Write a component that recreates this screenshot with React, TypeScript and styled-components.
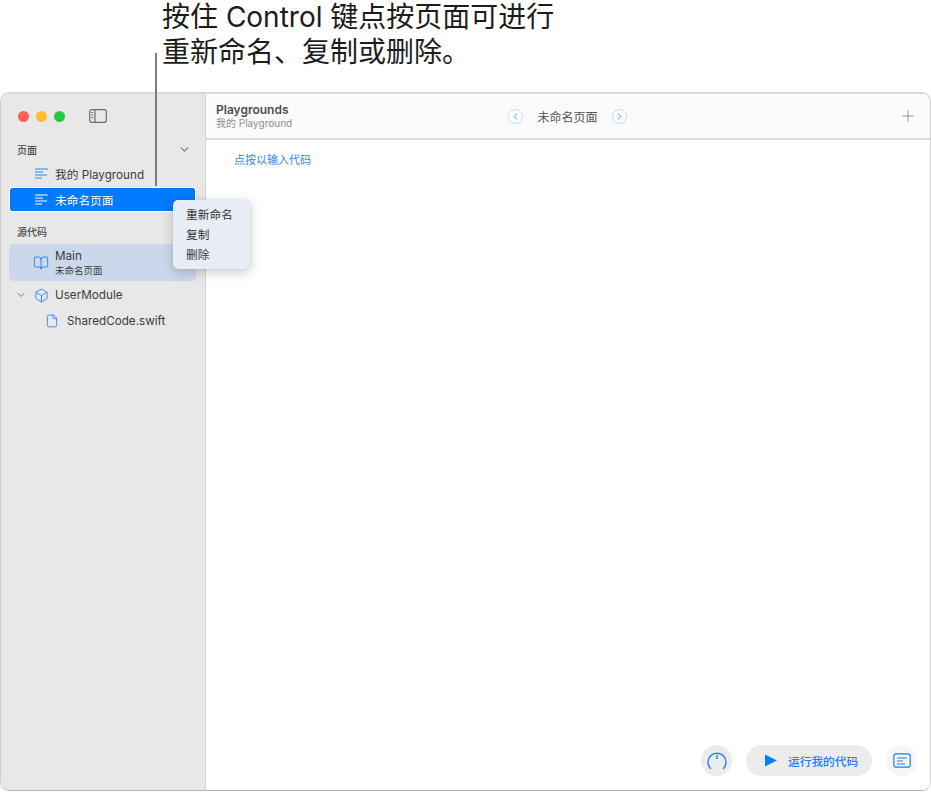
import styled, { createGlobalStyle } from "styled-components";
import { BookOpen, Box, ChevronDown, ChevronLeft, ChevronRight, File, Plus } from "lucide-react";

const GlobalStyle = createGlobalStyle`
  html, body {
    margin: 0;
    background: #fff;
  }
  * {
    box-sizing: border-box;
  }
  body {
    font-family: Inter, "Noto Sans CJK SC", sans-serif;
  }
`;

const Page = styled.div`
  position: relative;
  width: 931px;
  height: 793px;
  overflow: hidden;
`;

const Callout = styled.div`
  height: 92px;
  padding: 0 0 0 162px;
  font-size: 28px;
  line-height: 35px;
  color: #1c1c1c;
`;

const LeaderLine = styled.div`
  position: absolute;
  left: 155px;
  top: 53px;
  width: 2px;
  height: 133px;
  background: #7d7d7d;
  z-index: 3;
`;

const Window = styled.div`
  position: relative;
  display: flex;
  width: 931px;
  height: 699px;
  border: 1px solid #cfcfcf;
  border-top: 2px solid #d9d9d9;
  border-bottom-color: #b5b5b5;
  border-radius: 9px;
  overflow: hidden;
`;

const Sidebar = styled.aside`
  width: 205px;
  flex-shrink: 0;
  background: #e8e8e8;
  border-right: 1px solid #d4d4d4;
  padding: 0 9px 0 8px;
  color: #3c3c3c;
`;

const TitleBar = styled.div`
  display: flex;
  align-items: center;
  height: 44px;
  padding: 0 0 0 9px;
  gap: 7px;
`;

const Light = styled.span<{ $color: string }>`
  width: 11px;
  height: 11px;
  border-radius: 50%;
  background: ${(p) => p.$color};
`;

const ToggleIcon = styled.svg`
  margin-left: 17px;
  color: #6d6d6d;
`;

const SectionHead = styled.div<{ $top: number }>`
  display: flex;
  align-items: center;
  justify-content: space-between;
  height: 14px;
  margin-top: ${(p) => p.$top}px;
  padding: 0 5px 0 8px;
  font-size: 10px;
  font-weight: 500;
  color: #4a4a4a;

  svg {
    color: #777;
  }
`;

const Row = styled.div<{ $top: number; $selected?: boolean }>`
  display: flex;
  align-items: center;
  height: 23px;
  margin: ${(p) => p.$top}px 1px 0;
  padding-left: 25px;
  gap: 7px;
  font-size: 11.7px;
  border-radius: 2px;
  color: ${(p) => (p.$selected ? "#fff" : "#3c3c3c")};
  background: ${(p) => (p.$selected ? "#007aff" : "transparent")};
  outline: ${(p) => (p.$selected ? "1px solid #fff" : "none")};

  svg {
    color: ${(p) => (p.$selected ? "#fff" : "#2f86f6")};
    flex-shrink: 0;
  }
`;

const MainRow = styled.div`
  display: flex;
  align-items: center;
  height: 37px;
  margin-top: 6px;
  padding-left: 24px;
  gap: 6px;
  background: #cbd8ec;
  border-radius: 5px;

  svg {
    color: #2f86f6;
    flex-shrink: 0;
  }
`;

const RowText = styled.div`
  display: flex;
  flex-direction: column;
  gap: 2px;
  font-size: 11.7px;
  line-height: 14px;
`;

const RowSub = styled.span`
  font-size: 9.5px;
  line-height: 12px;
`;

const TreeRow = styled.div<{ $top: number; $left: number; $gap: number }>`
  display: flex;
  align-items: center;
  height: 20px;
  margin-top: ${(p) => p.$top}px;
  padding-left: ${(p) => p.$left}px;
  gap: ${(p) => p.$gap}px;
  font-size: 11.7px;

  svg {
    color: #2f86f6;
    flex-shrink: 0;
  }
`;

const TreeChevron = styled(ChevronDown)`
  && {
    color: #777;
    margin-right: 1px;
  }
`;

const ContextMenu = styled.div`
  position: absolute;
  left: 172px;
  top: 106px;
  width: 77px;
  height: 69px;
  display: flex;
  flex-direction: column;
  padding: 5px 0 0 13px;
  background: #e7ecf5;
  border-radius: 5px;
  box-shadow: 0 3px 12px rgba(0, 0, 0, 0.22), 0 0 1px rgba(0, 0, 0, 0.25);
  font-size: 11.7px;
  color: #333;
  z-index: 2;
`;

const MenuItem = styled.div`
  height: 20px;
  line-height: 20px;
`;

const Main = styled.main`
  flex: 1;
  display: flex;
  flex-direction: column;
  background: #fff;
`;

const Header = styled.header`
  display: grid;
  grid-template-columns: 1fr auto 1fr;
  align-items: center;
  height: 46px;
  flex-shrink: 0;
  padding: 0 13px 0 10px;
  background: #fbfbfb;
  border-bottom: 2px solid #dcdcdc;
`;

const HeaderTitle = styled.div`
  display: flex;
  flex-direction: column;
  font-size: 12px;
  line-height: 13px;
  font-weight: 600;
  color: #4c4c4c;
`;

const HeaderSub = styled.span`
  font-size: 10px;
  line-height: 14px;
  font-weight: 400;
  color: #8e8e8e;
`;

const Pager = styled.div`
  display: flex;
  align-items: center;
  gap: 14px;
  margin-left: 2px;
  font-size: 12px;
  color: #555;
`;

const PagerButton = styled.span`
  display: flex;
  align-items: center;
  justify-content: center;
  width: 15px;
  height: 15px;
  border-radius: 50%;
  background: #fff;
  border: 1px solid #bcd8fb;
  color: #2f86f6;
`;

const AddIcon = styled(Plus)`
  justify-self: end;
  color: #8a8a8a;
`;

const Editor = styled.div`
  flex: 1;
  padding: 13px 0 0 28px;
  font-size: 11px;
  line-height: 15px;
  color: #2f86f6;
`;

const Footer = styled.div`
  display: flex;
  align-items: center;
  justify-content: flex-end;
  gap: 14px;
  padding: 0 13px 14px 0;
`;

const RoundButton = styled.span<{ $bg: string }>`
  display: flex;
  align-items: center;
  justify-content: center;
  width: 31px;
  height: 31px;
  border-radius: 50%;
  background: ${(p) => p.$bg};
  color: #1d7ff5;
`;

const RunButton = styled.span`
  display: flex;
  align-items: center;
  width: 126px;
  height: 31px;
  padding-left: 19px;
  gap: 11px;
  border-radius: 16px;
  background: #ececec;
  font-size: 11.7px;
  font-weight: 500;
  color: #1d7ff5;
`;

const PlayIcon = () => (
  <svg width="12" height="13" viewBox="0 0 12 13" fill="#0a7bff">
    <path d="M0 0.5L12 6.5L0 12.5Z" />
  </svg>
);

const PageLines = () => (
  <svg width="13" height="11" viewBox="0 0 13 11" fill="none" stroke="currentColor" strokeWidth="1">
    <path d="M0 1h13M0 4h8M0 7h12M0 10h7" />
  </svg>
);

const Gauge = () => (
  <svg width="20" height="18" viewBox="0 0 20 18" fill="none" stroke="currentColor" strokeWidth="1.4">
    <path d="M3.5 16.5A9 9 0 1 1 16.5 16.5" strokeLinecap="round" />
    <path d="M10 3v4" />
  </svg>
);

const Console = () => (
  <svg width="18" height="15" viewBox="0 0 18 15" fill="none" stroke="currentColor" strokeWidth="1.2">
    <rect x="0.8" y="0.8" width="16.4" height="13.4" rx="2.5" />
    <path d="M4 5h10M4 8h6M4 11h8" />
  </svg>
);

export default function App() {
  return (
    <Page>
      <GlobalStyle />
      <Callout>
        按住 Control 键点按页面可进行
        <br />
        重新命名、复制或删除。
      </Callout>
      <LeaderLine />
      <Window>
        <Sidebar>
          <TitleBar>
            <Light $color="#ff5f57" />
            <Light $color="#febc2e" />
            <Light $color="#28c840" />
            <ToggleIcon width="18" height="14" viewBox="0 0 18 14" fill="none" stroke="currentColor" strokeWidth="1.2">
              <rect x="0.7" y="0.7" width="16.6" height="12.6" rx="2" />
              <path d="M6 0.7v12.6M2.3 3.5h2M2.3 6h2M2.3 8.5h2" />
            </ToggleIcon>
          </TitleBar>
          <SectionHead $top={4}>
            页面
            <ChevronDown size={13} />
          </SectionHead>
          <Row $top={6}>
            <PageLines />
            我的 Playground
          </Row>
          <Row $top={3} $selected>
            <PageLines />
            未命名页面
          </Row>
          <SectionHead $top={13}>源代码</SectionHead>
          <MainRow>
            <BookOpen size={16} strokeWidth={1.5} />
            <RowText>
              Main
              <RowSub>未命名页面</RowSub>
            </RowText>
          </MainRow>
          <TreeRow $top={4} $left={6} $gap={6}>
            <TreeChevron size={12} />
            <Box size={15} strokeWidth={1.5} />
            UserModule
          </TreeRow>
          <TreeRow $top={6} $left={36} $gap={8}>
            <File size={14} strokeWidth={1.5} />
            SharedCode.swift
          </TreeRow>
        </Sidebar>
        <ContextMenu>
          <MenuItem>重新命名</MenuItem>
          <MenuItem>复制</MenuItem>
          <MenuItem>删除</MenuItem>
        </ContextMenu>
        <Main>
          <Header>
            <HeaderTitle>
              Playgrounds
              <HeaderSub>我的 Playground</HeaderSub>
            </HeaderTitle>
            <Pager>
              <PagerButton>
                <ChevronLeft size={11} strokeWidth={2} />
              </PagerButton>
              未命名页面
              <PagerButton>
                <ChevronRight size={11} strokeWidth={2} />
              </PagerButton>
            </Pager>
            <AddIcon size={18} strokeWidth={1.2} />
          </Header>
          <Editor>点按以输入代码</Editor>
          <Footer>
            <RoundButton $bg="#ececec">
              <Gauge />
            </RoundButton>
            <RunButton>
              <PlayIcon />
              运行我的代码
            </RunButton>
            <RoundButton $bg="#f6f6f6">
              <Console />
            </RoundButton>
          </Footer>
        </Main>
      </Window>
    </Page>
  );
}
